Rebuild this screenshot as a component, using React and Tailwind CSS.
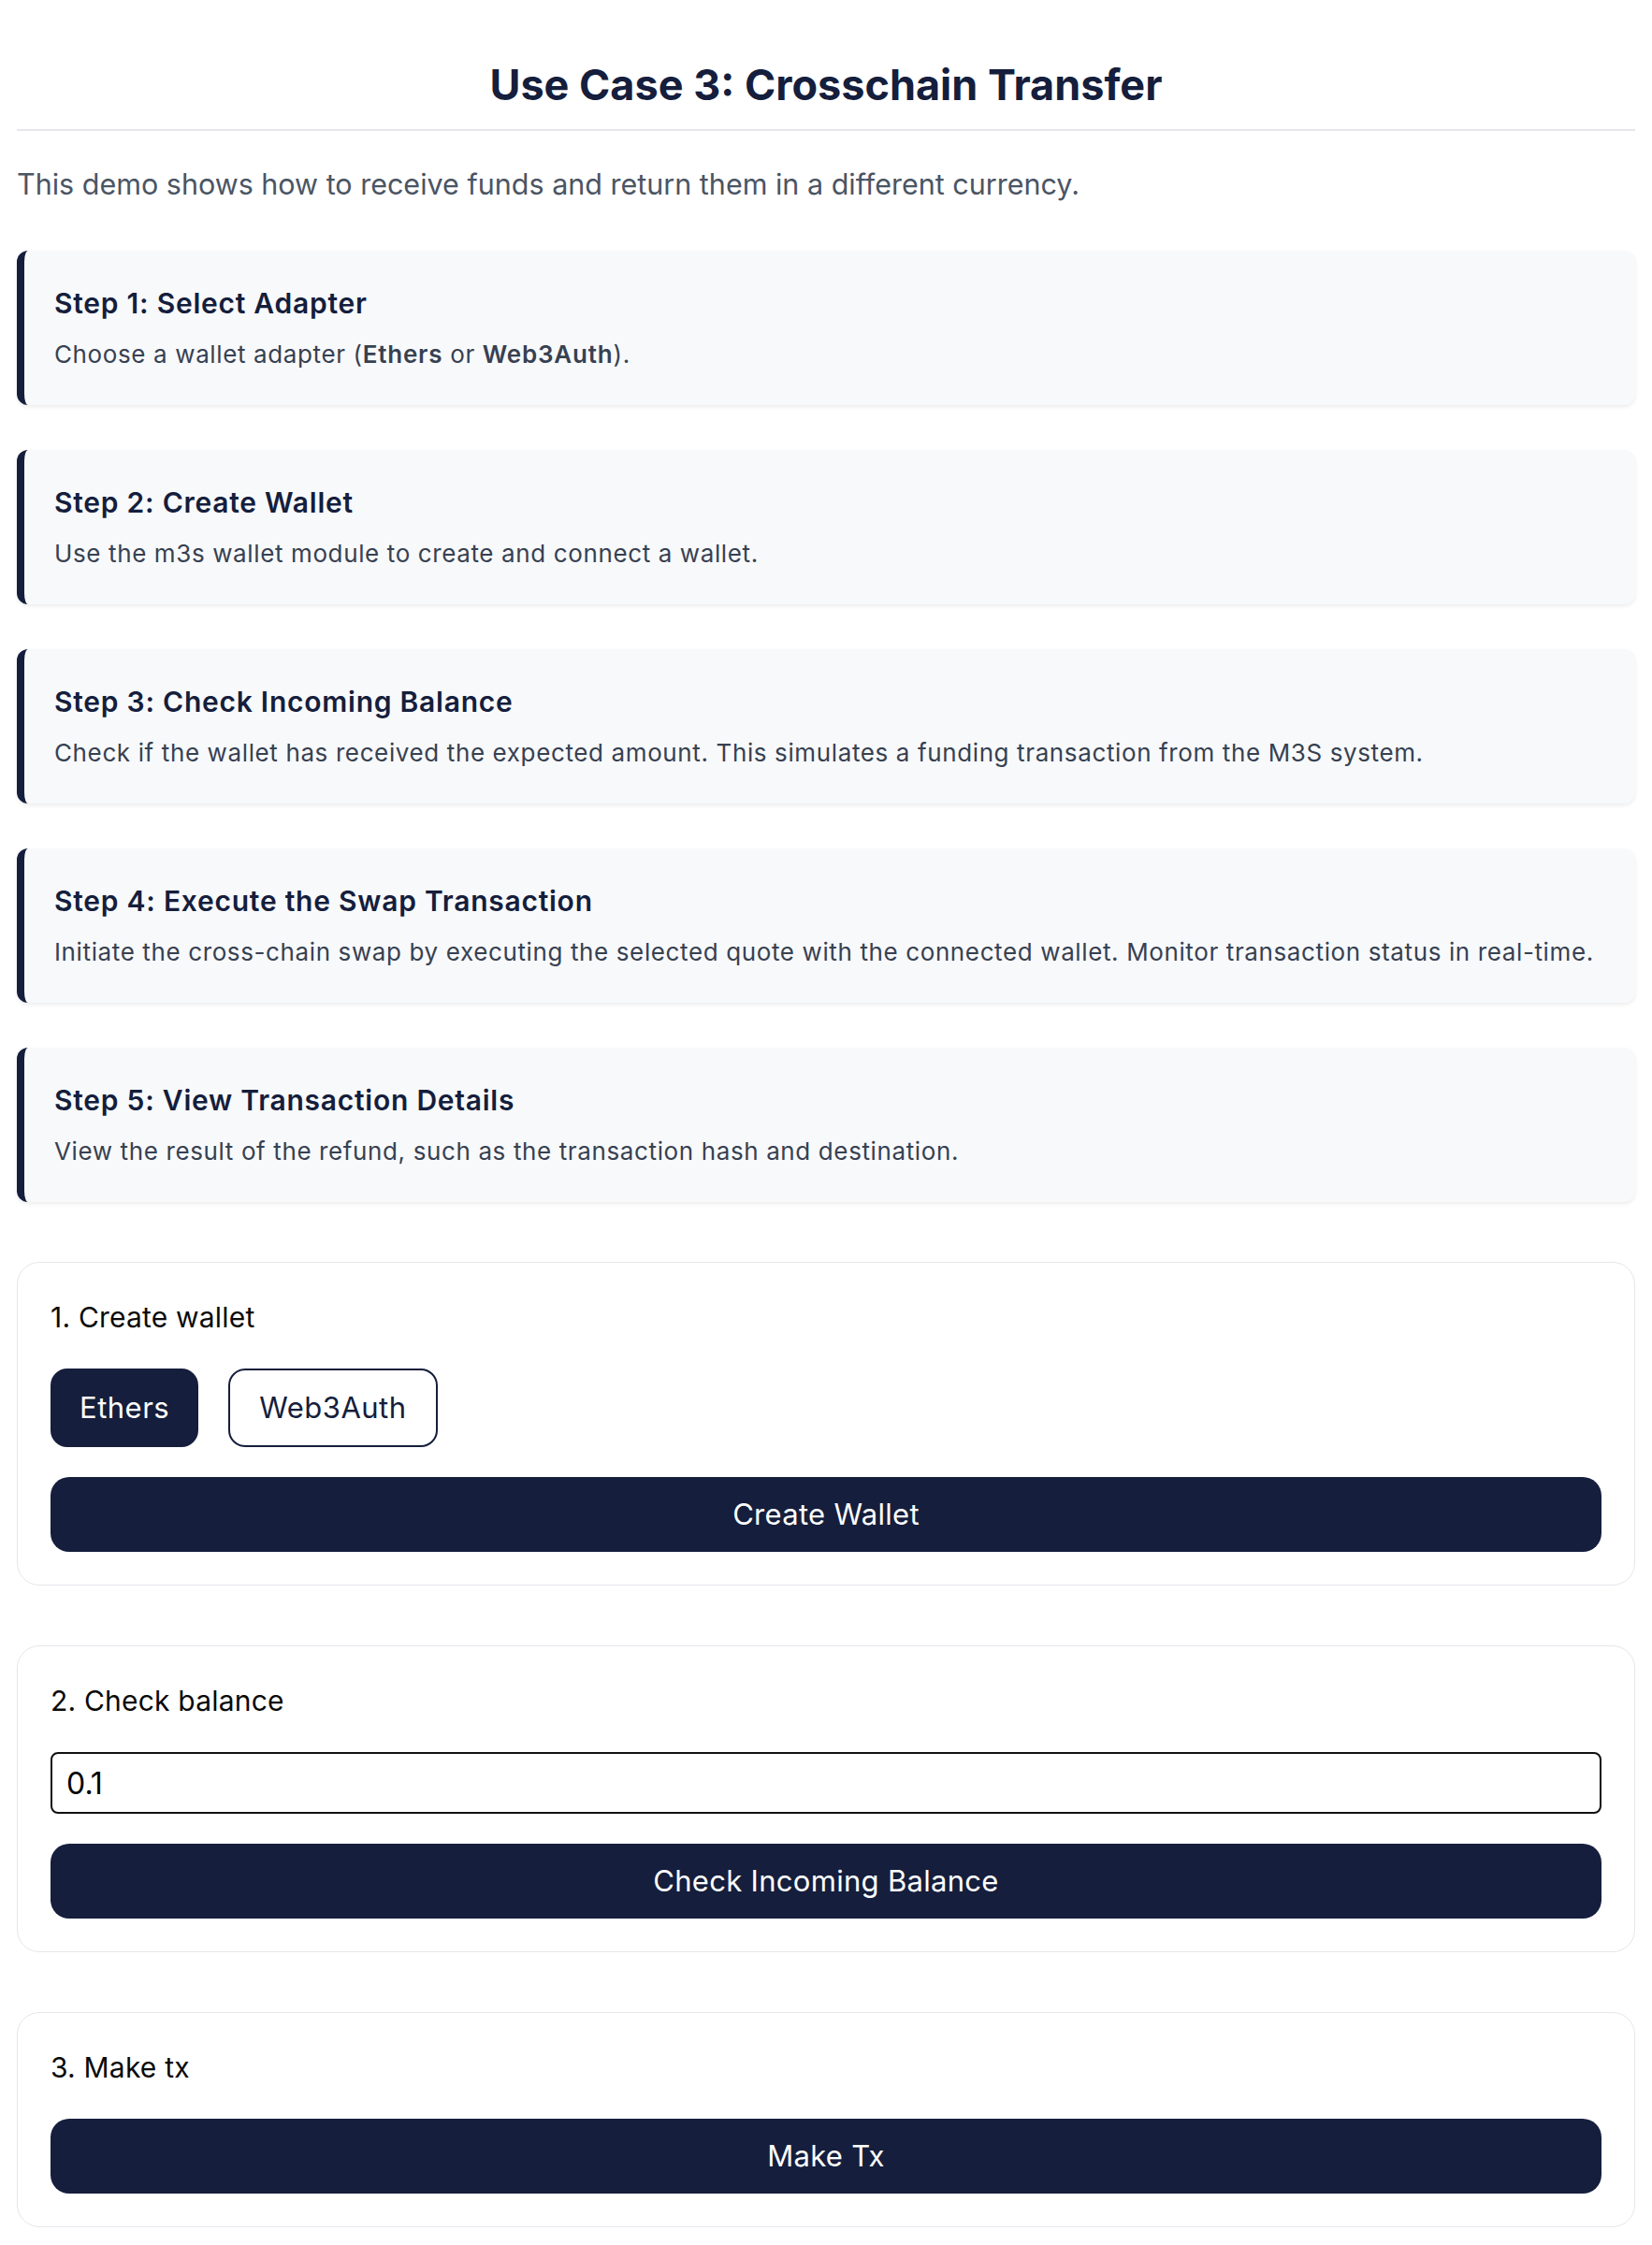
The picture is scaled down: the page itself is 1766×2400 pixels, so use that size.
import React from "react";

const steps = [
  {
    title: "Step 1: Select Adapter",
    desc: (
      <>
        Choose a wallet adapter (<strong className="font-semibold tracking-[0.8px]">Ethers</strong> or{" "}
        <strong className="font-semibold tracking-[0.8px]">Web3Auth</strong>).
      </>
    ),
  },
  { title: "Step 2: Create Wallet", desc: "Use the m3s wallet module to create and connect a wallet." },
  {
    title: "Step 3: Check Incoming Balance",
    desc: "Check if the wallet has received the expected amount. This simulates a funding transaction from the M3S system.",
  },
  {
    title: "Step 4: Execute the Swap Transaction",
    desc: "Initiate the cross-chain swap by executing the selected quote with the connected wallet. Monitor transaction status in real-time.",
  },
  {
    title: "Step 5: View Transaction Details",
    desc: "View the result of the refund, such as the transaction hash and destination.",
  },
];

function StepCard({ title, desc }) {
  return (
    <div className="rounded-[12px] border-l-[8px] border-[#151e3c] bg-[#f8f9fb] pl-[32px] pr-[32px] pt-[35px] pb-[36px] shadow-[0_2px_4px_rgba(0,0,0,0.08)]">
      <h3 className="text-[30px] leading-[42px] font-semibold tracking-[0.75px] text-[#151e3c]">{title}</h3>
      <p className="mt-[16px] text-[26px] leading-[36px] tracking-[0.62px] text-[#374151]">{desc}</p>
    </div>
  );
}

function Box({ title, children }) {
  return (
    <div className="mt-[64px] rounded-[24px] border border-[#e5e7eb] p-[35px] flex flex-col gap-[32px]">
      <div className="text-[30px] leading-[46px] tracking-[0.2px] text-[#0a0a0a]">{title}</div>
      {children}
    </div>
  );
}

function PrimaryButton({ children }) {
  return (
    <button className="h-[80px] w-full rounded-[20px] bg-[#151e3c] text-white text-[31px] tracking-[0.3px]">{children}</button>
  );
}

export default function App() {
  return (
    <div className="bg-white px-[18px] pt-[64px] pb-[40px]" style={{ fontFamily: "Inter, 'Liberation Sans', sans-serif" }}>
      <h1 className="text-center text-[45px] leading-[54px] font-bold text-[#151e3c] pb-[20px] border-b-2 border-[#e5e7eb]">
        Use Case 3: Crosschain Transfer
      </h1>
      <p className="mt-[34px] text-[30.5px] leading-[45px] text-[#4b5563]">
        This demo shows how to receive funds and return them in a different currency.
      </p>
      <div className="mt-[49px] flex flex-col gap-[48px]">
        {steps.map((s) => (
          <StepCard key={s.title} title={s.title} desc={s.desc} />
        ))}
      </div>

      <Box title="1. Create wallet">
        <div className="flex gap-[32px]">
          <button className="h-[84px] px-[29px] rounded-[18px] bg-[#151e3c] text-white text-[31px] tracking-[0.5px] border-2 border-[#151e3c]">
            Ethers
          </button>
          <button className="h-[84px] px-[31px] rounded-[18px] bg-white text-[#151e3c] text-[31px] tracking-[0.5px] border-2 border-[#151e3c]">
            Web3Auth
          </button>
        </div>
        <PrimaryButton>Create Wallet</PrimaryButton>
      </Box>

      <Box title="2. Check balance">
        <input
          defaultValue="0.1"
          className="h-[66px] w-full rounded-[8px] border-2 border-[#111] px-[15px] text-[32px] text-black outline-none"
        />
        <PrimaryButton>Check Incoming Balance</PrimaryButton>
      </Box>

      <Box title="3. Make tx">
        <PrimaryButton>Make Tx</PrimaryButton>
      </Box>
    </div>
  );
}
